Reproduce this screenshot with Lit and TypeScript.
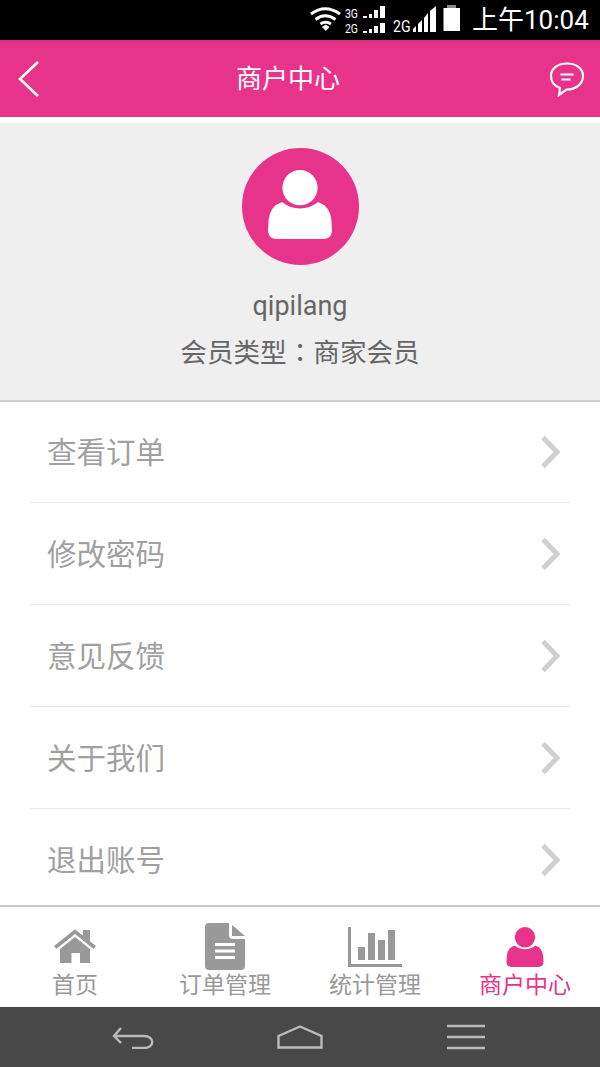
import { LitElement, html, svg, css, unsafeCSS } from 'lit';
import { customElement, property } from 'lit/decorators.js';

const PINK = '#e8338b';
const GREY = '#999999';

// shared silhouette, 64 wide and 70 tall; the shoulders curve away from the head
const person = (fill: string) => svg`
  <path fill=${fill} d="M14 32 Q2 36 .6 50 L0 60 Q0 69 9 69 H55 Q64 69 64 60 L63.4 50 Q62 36 50 32 Q42 38.5 32 38.5 Q22 38.5 14 32Z" />
  <circle cx="32" cy="17.7" r="17.6" fill=${fill} />
`;

const TAB_ICONS: Record<string, unknown> = {
  home: svg`
    <path fill=${GREY} d="M30 15 L45 27 V41 H35 V31 H26.5 V41 H15 V27Z" />
    <path fill=${GREY} d="M38 8 H45 V19 H38Z" />
    <path fill="none" stroke=${GREY} stroke-width="3.6" d="M10.2 25.5 L30 9.6 L49.8 25.5" />
  `,
  order: svg`
    <path fill=${GREY} d="M14 1 H34 V13 Q34 17 38 17 H50 V44 Q50 48 46 48 H14 Q10 48 10 44 V5 Q10 1 14 1Z" />
    <path fill=${GREY} d="M37 3 L50 14 H37Z" />
    <path fill="#fff" d="M20 21 H40 V24 H20Z M20 27.5 H40 V30.5 H20Z M20 34 H40 V37 H20Z" />
  `,
  stats: svg`
    <path fill=${GREY} d="M3 5 H6 V42 H57 V45 H3Z" />
    <path fill=${GREY} d="M13 25 H20 V38 H13Z M23 11 H30 V38 H23Z M33 18 H40 V38 H33Z M43 8 H50 V38 H43Z" />
  `,
  merchant: svg`<g transform="translate(11.5 5) scale(.578)">${person(PINK)}</g>`,
};

@customElement('status-bar')
export class StatusBar extends LitElement {
  static override styles = css`
    :host {
      display: flex;
      align-items: center;
      height: 40px;
      background: #000;
      color: #fff;
      padding-left: 310px;
      box-sizing: border-box;
    }
    svg { display: block; flex: none; }
    text { font-family: Roboto, sans-serif; fill: #fff; }
    .small { font-size: 13.5px; }
    .big { font-size: 17px; }
    .time {
      margin-left: 12px;
      font-family: Roboto, "Noto Sans CJK SC", sans-serif;
      font-size: 26px;
      line-height: 40px;
      white-space: nowrap;
    }
  `;

  override render() {
    return html`
      <svg width="150" height="40" viewBox="0 0 150 40">
        <g fill="none" stroke="#fff" stroke-width="3">
          <path d="M1 14 Q15 3.5 30 14" />
          <path d="M5.5 19.5 Q15 12 25.5 19.5" />
          <path d="M10.5 24 Q15.5 20.5 21 24" />
        </g>
        <path fill="#fff" d="M12 27 L15.8 24.5 L19.5 27 L15.8 31Z" />
        <text class="small" x="35" y="18" textLength="13" lengthAdjust="spacingAndGlyphs">3G</text>
        <text class="small" x="35" y="33" textLength="13" lengthAdjust="spacingAndGlyphs">2G</text>
        <path fill="#fff" d="M53 16 H57 V18 H53Z M59 14 H62 V18 H59Z M64 10 H68 V18 H64Z M70 6 H75 V18 H70Z" />
        <path fill="#fff" d="M53 31 H57 V33 H53Z M59 29 H62 V33 H59Z M64 26 H68 V33 H64Z M70 23 H75 V33 H70Z" />
        <text class="big" x="83" y="31.5" textLength="17.5" lengthAdjust="spacingAndGlyphs">2G</text>
        <path fill="#fff" d="M103 32 V29 L106 26 V32Z M108 32 V24 L112 20 V32Z M114 32 V18 L118 13 V32Z M120 32 V11 L126 6 V32Z" />
        <path fill="#888" d="M137 5 H146 V8 H137Z" />
        <path fill="#fff" d="M133.5 8 H150 V31 H133.5Z" />
      </svg>
      <span class="time">上午10:04</span>
    `;
  }
}

@customElement('app-root')
export class AppRoot extends LitElement {
  static override styles = css`
    :host {
      display: flex;
      flex-direction: column;
      width: 600px;
      height: 1067px;
      background: #fff;
      font-family: Roboto, "Noto Sans CJK SC", sans-serif;
      overflow: hidden;
    }
    svg { display: block; flex: none; }

    .top {
      display: flex;
      align-items: center;
      justify-content: space-between;
      height: 77px;
      flex: none;
      padding: 0 16px;
      box-sizing: border-box;
      color: #fff;
      background: linear-gradient(#d42d7f, ${unsafeCSS(PINK)} 5px);
    }
    .title { font-size: 26px; line-height: 77px; margin: 2px 12px 0 0; }

    .profile {
      display: flex;
      flex-direction: column;
      align-items: center;
      flex: none;
      height: 279px;
      margin-top: 6px;
      padding-top: 25px;
      box-sizing: border-box;
      background: #efefef;
      border-bottom: 2px solid #cfcfcf;
    }
    .avatar {
      display: flex;
      align-items: center;
      justify-content: center;
      width: 117px;
      height: 117px;
      padding-bottom: 3px;
      box-sizing: border-box;
      border-radius: 50%;
      background: ${unsafeCSS(PINK)};
    }
    .name { margin-top: 24px; font-size: 27px; line-height: 34px; color: #666; }
    .kind { margin-top: 9px; font-size: 26.6px; line-height: 38px; color: #666; white-space: nowrap; }
    .kind .colon { font-family: "Noto Sans CJK TC", sans-serif; }

    .menu { flex: 1; padding: 0 30px; min-height: 0; }
    .row {
      display: flex;
      align-items: center;
      justify-content: space-between;
      height: 101px;
      margin-bottom: 1px;
      box-sizing: border-box;
      padding: 0 10px 0 17px;
      border-bottom: 1px solid #e8e8e8;
      font-size: 29.5px;
      color: #a0a0a0;
    }
    .row span { margin-bottom: 4px; }
    .row:last-child { border-bottom-color: transparent; }

    .tabs {
      display: grid;
      grid-template-columns: repeat(4, 150px);
      height: 102px;
      flex: none;
      box-sizing: border-box;
      border-top: 2px solid #c8c8c8;
    }
    .tab {
      display: flex;
      flex-direction: column;
      align-items: center;
      padding-top: 15px;
      font-size: 23px;
      line-height: 28px;
      color: #999;
    }
    .tab.on { color: ${unsafeCSS(PINK)}; }

    .nav {
      display: grid;
      grid-template-columns: repeat(3, 166.5px);
      height: 60px;
      flex: none;
      padding-left: 50px;
      background: #484848;
    }
    .nav div { display: flex; align-items: center; justify-content: center; }
  `;

  @property({ type: Array })
  rows = ['查看订单', '修改密码', '意见反馈', '关于我们', '退出账号'];

  @property({ type: Array })
  tabs = [
    { id: 'home', label: '首页' },
    { id: 'order', label: '订单管理' },
    { id: 'stats', label: '统计管理' },
    { id: 'merchant', label: '商户中心' },
  ];

  override render() {
    return html`
      <status-bar></status-bar>

      <div class="top">
        <svg width="24" height="36" viewBox="0 0 24 36">
          <path fill="none" stroke="#fff" stroke-width="2.6" d="M22 1 L4 18 L22 35" />
        </svg>
        <span class="title">商户中心</span>
        <svg width="36" height="36" viewBox="0 0 36 36">
          <path fill="none" stroke="#fff" stroke-width="2.2" d="M19 2.5 C9 2.5 3 8 3 15 C3 20.5 6.5 25 12 27 L11 34 L18.5 28.5 C28.5 28.5 35 22.5 35 15 C35 8 29 2.5 19 2.5Z" />
          <path fill="none" stroke="#fff" stroke-width="2.2" d="M12.5 13.5 H25.5 M13.5 18.5 H22.5" />
        </svg>
      </div>

      <div class="profile">
        <div class="avatar">
          <svg width="64" height="70" viewBox="0 0 64 70">${person('#fff')}</svg>
        </div>
        <div class="name">qipilang</div>
        <div class="kind">会员类型<span class="colon">：</span>商家会员</div>
      </div>

      <div class="menu">
        ${this.rows.map(
          (label) => html`
            <div class="row">
              <span>${label}</span>
              <svg width="20" height="34" viewBox="0 0 20 34">
                <path fill="none" stroke="#d0d0d0" stroke-width="5" d="M3 2.5 L17 17 L3 31.5" />
              </svg>
            </div>
          `
        )}
      </div>

      <div class="tabs">
        ${this.tabs.map(
          (tab) => html`
            <div class="tab ${tab.id === 'merchant' ? 'on' : ''}">
              <svg width="60" height="50" viewBox="0 0 60 50">${TAB_ICONS[tab.id]}</svg>
              <span>${tab.label}</span>
            </div>
          `
        )}
      </div>

      <div class="nav">
        <div>
          <svg width="42" height="24" viewBox="0 0 42 24">
            <path fill="none" stroke="#bbb" stroke-width="2.4" d="M9 3 L2 11 L9 18 M2 11 H32 C43 11 43 23 32 23 H20" />
          </svg>
        </div>
        <div>
          <svg width="46" height="24" viewBox="0 0 46 24">
            <path fill="none" stroke="#bbb" stroke-width="2.4" d="M1.5 11 L23 1.5 L44.5 11 V22.5 H1.5Z" />
          </svg>
        </div>
        <div>
          <svg width="38" height="26" viewBox="0 0 38 26">
            <path fill="none" stroke="#bbb" stroke-width="2.4" d="M0 2 H38 M0 13 H38 M0 24 H38" />
          </svg>
        </div>
      </div>
    `;
  }
}
